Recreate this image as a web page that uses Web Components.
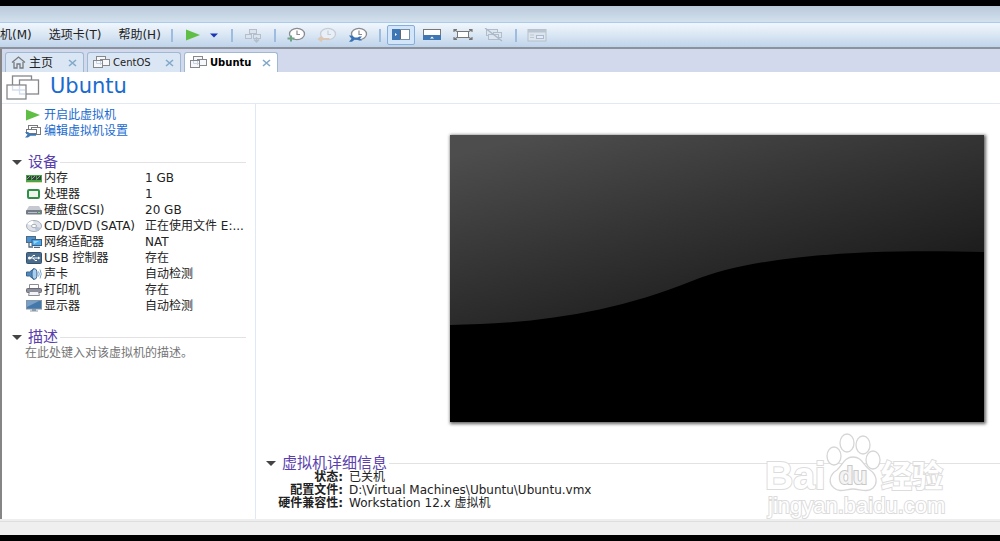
<!DOCTYPE html>
<html lang="zh-CN">
<head>
<meta charset="utf-8">
<title>Ubuntu</title>
<style>
    body {
        margin: 0;
        font-family: "DejaVu Sans", "Noto Sans CJK SC", sans-serif;
        font-size: 12px;
        line-height: 16px;
        color: #222;
        background: #000;
    }
</style>
</head>
<body>
<vm-window>
    <vm-menu slot="bar">机(M)</vm-menu>
    <vm-menu slot="bar">选项卡(T)</vm-menu>
    <vm-menu slot="bar">帮助(H)</vm-menu>
    <vm-toolbar slot="tools"></vm-toolbar>

    <vm-tab slot="tabs" icon="home" class="short">主页</vm-tab>
    <vm-tab slot="tabs" icon="vm" latin>CentOS</vm-tab>
    <vm-tab slot="tabs" icon="vm" latin active>Ubuntu</vm-tab>

    <vm-header slot="header">Ubuntu</vm-header>

    <vm-sidebar slot="side">
        <vm-action icon="play">开启此虚拟机</vm-action>
        <vm-action icon="edit">编辑虚拟机设置</vm-action>
        <vm-section label="设备"><vm-devices></vm-devices></vm-section>
        <vm-section label="描述"><vm-notes></vm-notes></vm-section>
    </vm-sidebar>

    <vm-screen slot="main"></vm-screen>
    <vm-section slot="main" label="虚拟机详细信息" class="wide"><vm-details></vm-details></vm-section>
    <vm-watermark slot="mark"></vm-watermark>
</vm-window>

<script>
const clock = (stroke, face) => `
    <ellipse cx="11" cy="7" rx="7.5" ry="5.7" fill="${face}" stroke="${stroke}" stroke-width="1.3"/>
    <path d="M11 3.5V7.5H14" fill="none" stroke="${stroke}" stroke-width="1.2"/>`;

// each icon: [width, height, markup]
const icons = {
    play: [16, 14, '<path d="M1 1.5L15 7L1 12.5Z" fill="#5fbf45"/>'],
    caret: [8, 5, '<path d="M0 0.5H8L4 4.5Z" fill="#1b35b5"/>'],
    send: [18, 16, `
        <g fill="#dbe4ee" stroke="#b4bfcb"><rect x="5.5" y="2.5" width="7" height="4"/><rect x="1.5" y="7.5" width="6" height="4"/><rect x="9.5" y="7.5" width="7" height="4"/></g>
        <path d="M12.5 10V14M10 12.5L12.5 15L15 12.5" fill="none" stroke="#b4bfcb" stroke-width="1.5"/>`],
    snap: [20, 16, clock('#8a8c90', '#fff') + '<path d="M5 8.5V14.5M1.5 11.5H8.5" stroke="#6fa287" stroke-width="2"/>'],
    revert: [20, 16, clock('#c6cdd6', '#e8eff7') + '<path d="M2 12H12.5M5 9.5L2 12L5 14.5" fill="none" stroke="#dcc7b6" stroke-width="2"/>'],
    manage: [20, 16, clock('#8a8c90', '#fff') + '<path d="M1 8.5H4L6.5 10.5H9.5L11.5 9.5H14L12 11.5L14 13.5H11.5L9.5 12.8H6.5L4 14.8H1L3.5 11.7Z" fill="#3a73b5"/>'],
    library: [18, 12, `
        <rect x="0.5" y="0.5" width="17" height="10" fill="#fff" stroke="#7790a8"/><rect width="8" height="11" fill="#3f77b4"/>
        <rect x="8" y="1" width="1" height="9" fill="#666"/><path d="M3 4L5 5.5L3 7Z" fill="#fff"/>`],
    thumbs: [18, 12, `
        <rect x="0.5" y="0.5" width="17" height="10" fill="#fff" stroke="#777"/><rect y="6" width="18" height="5" fill="#3f77b4"/>
        <path d="M7 9.5L9 7.5L11 9.5Z" fill="#fff"/>`],
    full: [20, 12, `
        <rect x="4.5" y="2.5" width="11" height="6" fill="#fff" stroke="#777"/>
        <path d="M1 3V0.5H4M16 0.5H19V3M19 8V10.5H16M4 10.5H1V8M1 0.5L4 2.5M19 0.5L16 2.5M1 10.5L4 8.5M19 10.5L16 8.5" fill="none" stroke="#777" stroke-width="1.2"/>`],
    unity: [20, 14, `
        <g fill="#dce6f1" stroke="#b1bdca"><rect x="2.5" y="1.5" width="11" height="6"/><rect x="9.5" y="4.5" width="8" height="5"/><rect x="4.5" y="6.5" width="10" height="5"/></g>
        <path d="M1 0L18 13" stroke="#aab7c5" stroke-width="1.3"/>`],
    console: [20, 13, `
        <rect x="1" y="0.5" width="18" height="11.5" fill="#dce5ee" stroke="#b4bfca"/><rect x="1" y="0.5" width="18" height="3" fill="#b9c5d1"/>
        <rect x="9.5" y="6.5" width="7" height="3" fill="#e4ecf5" stroke="#a9bace"/><path d="M3 6H7M3 8.5H7" stroke="#bec8d3"/>`],
    home: [15, 13, '<path d="M1 6.5L7.5 1L14 6.5M3 6V12H6V8H9V12H12V6" fill="none" stroke="#77797c" stroke-width="1.3"/>'],
    vm: [17, 13, `
        <g fill="#f6f8fb" stroke="#85878a"><rect x="3.5" y="0.5" width="9" height="7"/><rect x="7.5" y="3.5" width="9" height="6"/><rect x="0.5" y="4.5" width="9" height="7"/></g>
        <path d="M3.5 5V7.5H9M7.5 5V9" fill="none" stroke="#c7d4e2"/>`],
    vmbig: [34, 25, `
        <g fill="#fff" stroke="#85878a" stroke-width="1.3"><rect x="6.5" y="1" width="19" height="14"/><rect x="13.5" y="5" width="19" height="14"/><rect x="1" y="10" width="19" height="14"/></g>
        <path d="M6.5 11V15H19M13.5 11V19H19" fill="none" stroke="#d5dfee" stroke-width="1.3"/>`],
    edit: [17, 13, `
        <g fill="#fff" stroke="#77797c"><rect x="3.5" y="0.5" width="9" height="6"/><rect x="6.5" y="2.5" width="9" height="7"/><rect x="1.5" y="4.5" width="10" height="4"/></g>
        <path d="M0 7H3L5.5 8.7H11V10.7H5.5L3 12.5H0L2.5 9.8Z" fill="#3f77b4"/>`],
    memory: [16, 9, `
        <rect width="16" height="7" y="1" fill="#4aa548"/><path d="M1 2H5V6H1ZM6 2H10V6H6ZM11 2H15V6H11Z" fill="#34453a"/>
        <path d="M1 5L4 2M6 5L9 2M11 5L14 2" stroke="#8ea795"/><path d="M0.5 8.5H16" stroke="#d0b85a" stroke-dasharray="1 1"/>`],
    cpu: [14, 10, '<rect x="1" y="1" width="11" height="8" rx="1" fill="#eef3ec" stroke="#2f9148" stroke-width="2"/><path d="M3 9.5H11" stroke="#4f7558" stroke-dasharray="1 1"/>'],
    disk: [16, 10, '<path d="M3 1H13L16 6H0Z" fill="#c6cad0"/><rect y="5" width="16" height="4.5" rx="1" fill="#737b86"/><path d="M2 7.5H11" stroke="#b9c0c9"/><rect x="12" y="7" width="2" height="1" fill="#79e07f"/>'],
    cd: [16, 12, '<ellipse cx="8" cy="6" rx="7.5" ry="5.5" fill="#dfe3e9" stroke="#a5adb8"/><path d="M8 6L1 4Q3 1 7 0.7Z" fill="#fff"/><path d="M8 6L15 8Q13 11 10 11Z" fill="#b8c5d8"/><ellipse cx="8" cy="6" rx="2.5" ry="1.7" fill="#fff" stroke="#a5adb8"/>'],
    net: [16, 12, `
        <rect x="0.5" y="0.5" width="9" height="6" fill="#4a91cf" stroke="#4f6980"/><rect x="6" y="3.5" width="9.5" height="6" fill="#49a9ee" stroke="#3d5f7d"/>
        <path d="M3 7V11H7M8 11.5H14" fill="none" stroke="#4f6980" stroke-width="1.3"/><path d="M7.5 5H13L8 8Z" fill="#9ed6fb"/>`],
    usb: [16, 12, `
        <rect x="0.5" y="0.5" width="15" height="11" rx="1" fill="#4a6b8c" stroke="#35526e"/>
        <path d="M2.5 6H13M5 6L7 3.5H9M7 6L9 8.5H11" fill="none" stroke="#fff"/><circle cx="3.5" cy="6" r="1.5" fill="#fff"/><path d="M12 4.5L14.5 6L12 7.5Z" fill="#fff"/>`],
    sound: [16, 12, '<path d="M0.5 4H3.5L8 0.5V11.5L3.5 8H0.5Z" fill="#5289bd" stroke="#3b668f"/><ellipse cx="8.5" cy="6" rx="2.5" ry="5.2" fill="#a9cff0" stroke="#3b668f"/><path d="M12.5 3.5Q14 6 12.5 8.5M14 1.5Q16.5 6 14 10.5" fill="none" stroke="#7baad2"/>'],
    printer: [16, 12, '<path d="M3.5 0.5H12.5V5H3.5Z" fill="#fff" stroke="#8b8d96"/><rect x="0.5" y="4.5" width="15" height="4" rx="1" fill="#8d8e9b" stroke="#686a76"/><path d="M3.5 7.5H12.5L13.5 11.5H2.5Z" fill="#f2f3f7" stroke="#8b8d96"/>'],
    display: [16, 12, '<rect x="0.5" y="0.5" width="15" height="8.5" fill="#4477aa" stroke="#8296aa"/><path d="M1 1H13L1 7Z" fill="#789fc5"/><path d="M6 9H10V10.5H12V11.5H4V10.5H6Z" fill="#8e9aa6"/>']
};

const icon = name => {
    const [w, h, body] = icons[name];
    return `<svg width="${w}" height="${h}" viewBox="0 0 ${w} ${h}" aria-hidden="true">${body}</svg>`;
};

class Base extends HTMLElement {
    connectedCallback(){
        this.attachShadow({mode: 'open'}).innerHTML = `
        <style>
            button { font: inherit; color: inherit; border: 0; padding: 0; background: none; }
            svg { display: block; flex: none; }
            ${this.css()}
        </style>
        ${this.html()}`;
    }
}

class VmWindow extends Base {
    css(){
        return `
        :host { display: flex; flex-direction: column; box-sizing: border-box; min-height: 100vh; padding: 6px 0; position: relative; }
        .title { height: 17px; background: linear-gradient(#b9c9d8, #d3e1ee); border-bottom: 1px solid #a9cbee; box-sizing: border-box; }
        .bar { display: flex; align-items: center; height: 24px; background: linear-gradient(#f1f6fc, #dce8f5 45%, #bfd4ea); border-bottom: 2px solid #8c929b; }
        .menus { display: flex; gap: 17px; padding-right: 5px; }
        .frame { flex: 1; display: flex; flex-direction: column; border-left: 2px solid #858585; background: #fff; }
        .tabs { display: flex; align-items: flex-end; gap: 3px; height: 23px; padding-left: 3px; background: #d3d9ec; }
        .body { flex: 1; display: grid; grid-template-columns: 254px minmax(0, 1fr); border-top: 1px solid #e1e9f3; }
        .side { border-right: 1px solid #dfe8f5; }
        .main { display: flex; flex-direction: column; justify-content: space-between; padding: 31px 0 9px; }
        .status { height: 16px; box-sizing: border-box; background: #efefef; border-top: 2px solid #eee; box-shadow: inset 0 1px #dedede; }`;
    }
    html(){
        return `
        <div class="title"></div>
        <div class="bar"><nav class="menus"><slot name="bar"></slot></nav><slot name="tools"></slot></div>
        <div class="frame">
            <div class="tabs" role="tablist"><slot name="tabs"></slot></div>
            <slot name="header"></slot>
            <div class="body">
                <div class="side"><slot name="side"></slot></div>
                <div class="main"><slot name="main"></slot></div>
            </div>
        </div>
        <div class="status"></div>
        <slot name="mark"></slot>`;
    }
}

class VmMenu extends Base {
    css(){ return `:host { display: block; white-space: nowrap; }`; }
    html(){ return `<button><slot></slot></button>`; }
}

class VmToolbar extends Base {
    css(){
        return `
        :host { display: flex; align-items: center; }
        button { display: flex; align-items: center; justify-content: center; width: 31px; height: 20px; }
        .drop { width: 17px; padding-right: 6px; }
        .on svg { padding: 3px 4px; border: 1px solid #86aedc; border-radius: 2px; background: #d3e5f9; }
        i { width: 2px; height: 13px; margin: 0 5px; background: #9dbce0; }`;
    }
    html(){
        const button = (name, label, cls = '') => `<button class="${cls}" aria-label="${label}">${icon(name)}</button>`;
        return `
        <i></i>${button('play', '开机')}${button('caret', '电源', 'drop')}
        <i></i>${button('send', '发送')}
        <i></i>${button('snap', '拍摄快照')}${button('revert', '恢复快照')}${button('manage', '管理快照')}
        <i></i>${button('library', '库', 'on')}${button('thumbs', '缩略图')}${button('full', '全屏')}${button('unity', 'Unity')}
        <i></i>${button('console', '控制台')}`;
    }
}

class VmTab extends Base {
    css(){
        return `
        :host { display: flex; align-items: center; box-sizing: border-box; min-width: 94px; height: 20px; padding: 0 6px 0 5px;
            border: 1px solid #9fb9d3; border-bottom: 0; border-radius: 3px 3px 0 0; background: #dbe6f4; }
        :host(.short) { min-width: 79px; }
        :host([latin]) { font-size: 10px; }
        :host([active]) { background: #fff; font-weight: bold; color: #000; }
        .tab { display: flex; align-items: center; gap: 3px; }
        .close { margin-left: auto; }`;
    }
    html(){
        return `
        <button class="tab" role="tab">${icon(this.getAttribute('icon'))}<slot></slot></button>
        <button class="close" aria-label="关闭"><svg width="9" height="8" viewBox="0 0 9 8"><path d="M1 1L8 7M8 1L1 7" stroke="#82a9c9" stroke-width="1.6"/></svg></button>`;
    }
}

class VmHeader extends Base {
    css(){
        return `
        :host { display: flex; align-items: center; gap: 10px; height: 31px; padding-left: 4px; }
        h1 { margin: 0; padding-bottom: 4px; font-size: 21px; line-height: 24px; font-weight: normal; color: #1a6bd0; }`;
    }
    html(){ return `${icon('vmbig')}<h1><slot></slot></h1>`; }
}

class VmSidebar extends Base {
    css(){ return `:host { display: block; padding: 3px 9px 0 10px; }`; }
    html(){ return `<slot></slot>`; }
}

class VmAction extends Base {
    css(){
        return `
        :host { display: block; padding-left: 13px; }
        a { display: flex; align-items: center; height: 16px; color: #1a6bd0; text-decoration: none; }
        span { display: flex; width: 19px; }`;
    }
    html(){ return `<a href="#"><span>${icon(this.getAttribute('icon'))}</span><slot></slot></a>`; }
}

class VmSection extends Base {
    css(){
        return `
        :host { display: block; margin-top: 15px; }
        :host(.wide) { padding-left: 10px; }
        h2 { display: flex; align-items: center; margin: 0; font-size: 15px; line-height: 16px; font-weight: normal; color: #5a3fae; }
        h2::after { content: ""; flex: 1; height: 1px; margin-left: 2px; background: #e2e2e2; }
        button { display: flex; align-items: center; gap: 6px; }`;
    }
    html(){
        return `
        <h2><button><svg width="10" height="5" viewBox="0 0 10 5"><path d="M0 0H10L5 5Z" fill="#444"/></svg>${this.getAttribute('label')}</button></h2>
        <slot></slot>`;
    }
}

const devices = [
    ['memory', '内存', '1 GB'],
    ['cpu', '处理器', '1'],
    ['disk', '硬盘(SCSI)', '20 GB'],
    ['cd', 'CD/DVD (SATA)', '正在使用文件 E:...'],
    ['net', '网络适配器', 'NAT'],
    ['usb', 'USB 控制器', '存在'],
    ['sound', '声卡', '自动检测'],
    ['printer', '打印机', '存在'],
    ['display', '显示器', '自动检测']
];

class VmDevices extends Base {
    css(){
        return `
        :host { display: block; padding-left: 13px; }
        table { border-collapse: collapse; table-layout: fixed; width: 100%; }
        td, th { padding: 0; height: 16px; font-weight: normal; text-align: left; white-space: nowrap; }
        th { width: 120px; }
        div { display: flex; align-items: center; }
        span { display: flex; justify-content: center; width: 17px; margin-right: 2px; }`;
    }
    html(){
        const rows = devices.map(([name, label, value]) =>
            `<tr><th scope="row"><div><span>${icon(name)}</span>${label}</div></th><td>${value}</td></tr>`);
        return `<table>${rows.join('')}</table>`;
    }
}

class VmNotes extends Base {
    css(){
        return `
        :host { display: block; padding-left: 13px; }
        textarea { display: block; box-sizing: border-box; width: 100%; height: 32px; padding: 0; border: 0; resize: none; overflow: hidden; background: none; font: inherit; }
        textarea::placeholder { color: #757575; }`;
    }
    html(){ return `<textarea aria-label="描述" placeholder="在此处键入对该虚拟机的描述。"></textarea>`; }
}

class VmDetails extends Base {
    css(){
        return `
        :host { display: block; }
        dl { display: grid; grid-template-columns: 77px 1fr; column-gap: 6px; margin: 0; line-height: 13px; }
        dt { text-align: right; font-weight: bold; white-space: nowrap; }
        dd { margin: 0; }`;
    }
    html(){
        return `
        <dl>
            <dt>状态:</dt><dd>已关机</dd>
            <dt>配置文件:</dt><dd>D:\\Virtual Machines\\Ubuntu\\Ubuntu.vmx</dd>
            <dt>硬件兼容性:</dt><dd>Workstation 12.x 虚拟机</dd>
        </dl>`;
    }
}

class VmScreen extends Base {
    css(){
        return `
        :host { display: block; margin: 0 16px 0 194px; }
        svg { width: 100%; height: auto; box-shadow: 1px 1px 3px 1px rgba(0, 0, 0, .6); }`;
    }
    html(){
        return `
        <svg viewBox="0 0 534 287" role="img" aria-label="Ubuntu">
            <defs><linearGradient id="g" gradientUnits="userSpaceOnUse" x1="45" y1="10" x2="105" y2="235">
                <stop offset="0" stop-color="#4d4d4d"/><stop offset=".5" stop-color="#343434"/><stop offset="1" stop-color="#1c1c1c"/>
            </linearGradient></defs>
            <rect width="534" height="287"/>
            <path d="M0 0H534V117C430 114 310 118 242 146C160 179 80 189 0 190Z" fill="url(#g)"/>
        </svg>`;
    }
}

class VmWatermark extends Base {
    css(){
        return `
        :host { position: absolute; right: 52px; bottom: 20px; pointer-events: none; }
        text { fill: #fff; stroke: #dcdcdc; stroke-width: 2px; paint-order: stroke; font-family: "Liberation Sans", "Noto Sans CJK SC", sans-serif; }
        .b { font-weight: bold; }
        .du { fill: #f4f4f4; stroke: #c8c8c8; }`;
    }
    html(){
        return `
        <svg width="184" height="88" viewBox="0 0 184 88">
            <g fill="#fff" stroke="#d6d6d6" stroke-width="1.3">
                <ellipse cx="70" cy="23" rx="7" ry="9"/><ellipse cx="83" cy="10" rx="7" ry="9"/>
                <ellipse cx="99" cy="12" rx="7" ry="9"/><ellipse cx="109" cy="27" rx="7" ry="9"/>
                <path d="M89 24C98 24 99 32 106 37C113 42 114 50 109 55C103 60 96 56 89 56C82 56 76 60 70 55C64 50 65 42 73 37C79 32 80 24 89 24Z"/>
            </g>
            <text class="b" x="1" y="56" font-size="39">Bai</text>
            <text class="b du" x="75" y="51" font-size="23">du</text>
            <text class="b" x="117" y="54" font-size="31">经验</text>
            <text x="4" y="80" font-size="22">jingyan.baidu.com</text>
        </svg>`;
    }
}

customElements.define('vm-window', VmWindow)
customElements.define('vm-menu', VmMenu)
customElements.define('vm-toolbar', VmToolbar)
customElements.define('vm-tab', VmTab)
customElements.define('vm-header', VmHeader)
customElements.define('vm-sidebar', VmSidebar)
customElements.define('vm-action', VmAction)
customElements.define('vm-section', VmSection)
customElements.define('vm-devices', VmDevices)
customElements.define('vm-notes', VmNotes)
customElements.define('vm-details', VmDetails)
customElements.define('vm-screen', VmScreen)
customElements.define('vm-watermark', VmWatermark)
</script>
</body>
</html>
